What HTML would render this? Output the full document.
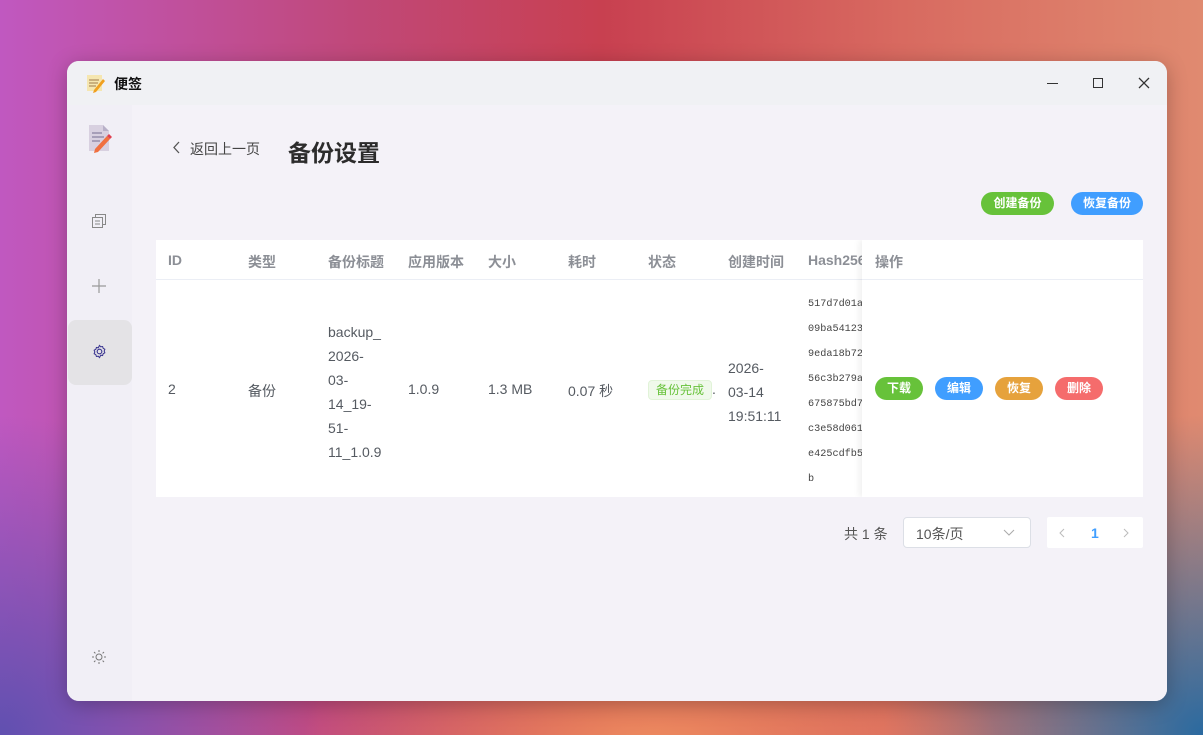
<!DOCTYPE html>
<html><head><meta charset="utf-8"><style>
*{margin:0;padding:0;box-sizing:border-box}
body{width:1203px;height:735px;overflow:hidden;position:relative;font-family:"Liberation Sans","Noto Sans CJK SC",sans-serif;
background:
radial-gradient(ellipse 500px 300px at 650px 760px,#f09060 0%,rgba(240,140,90,0) 70%),
radial-gradient(ellipse 400px 400px at 1203px 735px,#2a6aa0 0%,rgba(40,100,160,0) 80%),
radial-gradient(ellipse 400px 400px at 0px 735px,#6050b0 0%,rgba(90,80,170,0) 80%),
linear-gradient(90deg,#c058c0 0%,#c04878 30%,#c84050 50%,#d86a60 75%,#e08a70 100%);}
.win{position:absolute;left:67px;top:61px;width:1100px;height:640px;border-radius:12px;overflow:hidden;background:#f3f1f8;box-shadow:0 4px 20px rgba(0,0,0,.25)}
.title{position:absolute;left:0;top:0;width:1100px;height:44px;background:#f0f1f4}
.title .t{position:absolute;left:47px;top:13px;font-size:14px;font-weight:bold;color:#111}
.side{position:absolute;left:0;top:44px;width:65px;height:596px;background:#f1eff6}
.main{position:absolute;left:65px;top:44px;width:1035px;height:596px;background:#f4f2f8}
.abs{position:absolute}
.btn{position:absolute;height:23px;border-radius:12px;color:#fff;font-size:12px;font-weight:bold;text-align:center;line-height:23px}
.th{position:absolute;top:12px;font-size:14px;color:#8c8f96;font-weight:bold}
.td{position:absolute;font-size:14px;color:#555a61}
.hash{position:absolute;left:652px;top:52px;font-family:"Liberation Mono","DejaVu Sans Mono",monospace;font-size:10.2px;color:#444;line-height:25px}
</style></head><body>
<div class="win">
 <div class="title">
  <svg class="abs" style="left:19px;top:12px" width="20" height="20" viewBox="0 0 20 20"><rect x="1" y="2" width="15" height="16" fill="#f5e6b0"/><path d="M3 7h10M3 10h9M3 13h7" stroke="#b09060" stroke-width="1.2"/><path d="M8 17l9-11 2 2-9 11-3 1z" fill="#f0a020"/></svg>
  <div class="t">便签</div>
  <div class="abs" style="left:980px;top:22px;width:11px;height:1px;background:#333"></div>
  <div class="abs" style="left:1026px;top:17px;width:10px;height:10px;border:1.2px solid #333"></div>
  <svg class="abs" style="left:1071px;top:16px" width="12" height="12"><path d="M1 1l10 10M11 1L1 11" stroke="#333" stroke-width="1.3"/></svg>
 </div>
 <div class="side">
  <svg class="abs" style="left:20px;top:18px" width="26" height="30" viewBox="0 0 26 30"><path d="M2 2h14l6 6v20H2z" fill="#d8d0e0"/><path d="M16 2v6h6" fill="#b8b0c8"/><path d="M5 10h10M5 14h12M5 18h8" stroke="#8880a0" stroke-width="1.3"/><path d="M8 26l12-13 3 3-12 13-4 1z" fill="#f07040"/><path d="M20 13l3 3 2-2-3-3z" fill="#e04050"/></svg>
  <svg class="abs" style="left:25px;top:109px" width="14" height="14"><rect x="3.5" y=".5" width="10" height="10" fill="none" stroke="#888"/><rect x=".5" y="3.5" width="10" height="10" fill="#f1eff6" stroke="#888"/><path d="M3 7h5M3 10h5" stroke="#888"/></svg>
  <svg class="abs" style="left:25px;top:174px" width="14" height="14"><path d="M7 0v14M0 7h14" stroke="#999" stroke-width="1.2"/></svg>
  <div class="abs" style="left:1px;top:215px;width:64px;height:65px;background:#e4e3e6;border-radius:8px"></div>
  <svg class="abs" style="left:25px;top:239px" width="15" height="15" viewBox="0 0 16 16"><circle cx="8" cy="8" r="2.5" fill="none" stroke="#3a3590" stroke-width="1.2"/><path d="M8 1.5l1.3 1.5 2-.3.6 1.9 1.8 1-.7 1.9.7 1.9-1.8 1-.6 1.9-2-.3L8 14.5l-1.3-1.5-2 .3-.6-1.9-1.8-1 .7-1.9-.7-1.9 1.8-1 .6-1.9 2 .3z" fill="none" stroke="#3a3590" stroke-width="1.1"/></svg>
  <svg class="abs" style="left:25px;top:545px" width="14" height="14"><circle cx="7" cy="7" r="3" fill="none" stroke="#777"/><path d="M7 0v2M7 12v2M0 7h2M12 7h2M2 2l1.4 1.4M10.6 10.6L12 12M2 12l1.4-1.4M10.6 3.4L12 2" stroke="#777"/></svg>
 </div>
 <div class="main">
  <svg class="abs" style="left:40px;top:36px" width="8" height="13"><path d="M7 1L2 6.5 7 12" fill="none" stroke="#555" stroke-width="1.3"/></svg>
  <div class="abs" style="left:58px;top:34px;font-size:14px;color:#444">返回上一页</div>
  <div class="abs" style="left:156px;top:29px;font-size:23px;font-weight:bold;color:#2c2c2c">备份设置</div>
  <div class="btn" style="left:849px;top:87px;width:73px;background:#67c23a">创建备份</div>
  <div class="btn" style="left:939px;top:87px;width:72px;background:#409eff">恢复备份</div>
  <div class="abs" style="left:24px;top:135px;width:987px;height:257px;background:#fff;overflow:hidden">
   <div class="abs" style="left:0;top:39px;width:987px;height:1px;background:#ebeef5"></div>
   <div class="th" style="left:12px">ID</div>
   <div class="th" style="left:92px">类型</div>
   <div class="th" style="left:172px">备份标题</div>
   <div class="th" style="left:252px">应用版本</div>
   <div class="th" style="left:332px">大小</div>
   <div class="th" style="left:412px">耗时</div>
   <div class="th" style="left:492px">状态</div>
   <div class="th" style="left:572px">创建时间</div>
   <div class="th" style="left:652px">Hash256</div>
   <div class="td" style="left:12px;top:141px">2</div>
   <div class="td" style="left:92px;top:141px">备份</div>
   <div class="td" style="left:172px;top:80px;line-height:24px">backup_<br>2026-<br>03-<br>14_19-<br>51-<br>11_1.0.9</div>
   <div class="td" style="left:252px;top:141px">1.0.9</div>
   <div class="td" style="left:332px;top:141px">1.3 MB</div>
   <div class="td" style="left:412px;top:141px">0.07 秒</div>
   <div class="abs" style="left:492px;top:140px;width:64px;height:20px;background:#f0f9eb;border:1px solid #e1f3d8;border-radius:4px;color:#67c23a;font-size:12px;text-align:center;line-height:18px">备份完成</div>
   <div class="td" style="left:556px;top:141px">.</div>
   <div class="td" style="left:572px;top:116px;line-height:24px">2026-<br>03-14<br>19:51:11</div>
   <div class="hash">517d7d01a<br>09ba54123<br>9eda18b72<br>56c3b279a<br>675875bd7<br>c3e58d061<br>e425cdfb5<br>b</div>
   <div class="abs" style="left:706px;top:0;width:281px;height:257px;background:#fff;box-shadow:-3px 0 6px rgba(0,0,0,.06)">
    <div class="abs" style="left:0;top:39px;width:281px;height:1px;background:#ebeef5"></div>
    <div class="th" style="left:13px">操作</div>
    <div class="btn" style="left:13px;top:137px;width:48px;background:#67c23a">下载</div>
    <div class="btn" style="left:73px;top:137px;width:48px;background:#409eff">编辑</div>
    <div class="btn" style="left:133px;top:137px;width:48px;background:#e6a23c">恢复</div>
    <div class="btn" style="left:193px;top:137px;width:48px;background:#f56c6c">删除</div>
   </div>
  </div>
  <div class="abs" style="left:712px;top:419px;font-size:14px;color:#555">共 1 条</div>
  <div class="abs" style="left:771px;top:412px;width:128px;height:31px;background:#fff;border:1px solid #dcdfe6;border-radius:4px;font-size:14px;color:#555;padding:6px 12px">10条/页</div>
  <svg class="abs" style="left:871px;top:424px" width="12" height="7"><path d="M1 1l5 5 5-5" fill="none" stroke="#aaa"/></svg>
  <div class="abs" style="left:915px;top:412px;width:96px;height:31px;background:#fff;border-radius:2px"></div>
  <svg class="abs" style="left:927px;top:423px" width="6" height="10"><path d="M5 1L1 5l4 4" fill="none" stroke="#bbb"/></svg>
  <div class="abs" style="left:959px;top:420px;font-size:14px;font-weight:bold;color:#409eff">1</div>
  <svg class="abs" style="left:991px;top:423px" width="6" height="10"><path d="M1 1l4 4-4 4" fill="none" stroke="#bbb"/></svg>
 </div>
</div>
</body></html>
